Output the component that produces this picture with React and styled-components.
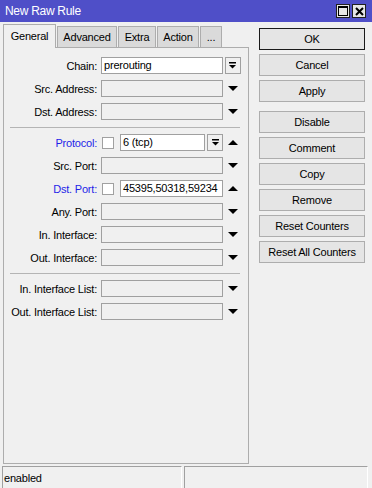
import styled, { createGlobalStyle } from "styled-components"

const GlobalStyle = createGlobalStyle`
    html, body {
        margin: 0;
        padding: 0;
        background: #f0f0f0;
    }
    body {
        font-family: "Liberation Sans", Arial, sans-serif;
        font-size: 11px;
        letter-spacing: -0.2px;
        color: #000;
    }
`

const tabs = ["General", "Advanced", "Extra", "Action", "..."]
const tabWidths = [53, 60, 38, 42, 22]

const rows = [
    { label: "Chain:", value: "prerouting", tail: "select" },
    { label: "Src. Address:", tail: "down" },
    { label: "Dst. Address:", tail: "down" },
    { sep: true },
    { label: "Protocol:", blue: true, check: true, value: "6 (tcp)", inner: true, tail: "up" },
    { label: "Src. Port:", tail: "down" },
    { label: "Dst. Port:", blue: true, check: true, value: "45395,50318,59234", tail: "up" },
    { label: "Any. Port:", tail: "down" },
    { label: "In. Interface:", tail: "down" },
    { label: "Out. Interface:", tail: "down" },
    { sep: true },
    { label: "In. Interface List:", tail: "down" },
    { label: "Out. Interface List:", tail: "down" },
]

const buttons = [
    ["OK", "Cancel", "Apply"],
    ["Disable", "Comment", "Copy", "Remove", "Reset Counters", "Reset All Counters"],
]

function Triangle({ up }) {
    return (
        <svg width="10" height="5" viewBox="0 0 10 5">
            <polygon points={up ? "0,5 10,5 5,0" : "0,0 10,0 5,5"} fill="#000" />
        </svg>
    )
}

function SelectIcon() {
    return (
        <svg width="7" height="7" viewBox="0 0 7 7">
            <rect x="0" y="0" width="7" height="1.5" fill="#000" />
            <polygon points="0,3 7,3 3.5,6.5" fill="#000" />
        </svg>
    )
}

export default function App() {
    return (
        <>
            <GlobalStyle />
            <Window>
                <TitleBar>
                    <Title>New Raw Rule</Title>
                    <Caption>
                        <CaptionButton>
                            <svg width="10" height="10" viewBox="0 0 10 10">
                                <rect x="0.5" y="0.5" width="9" height="9" fill="none" stroke="#000" />
                                <rect x="0.5" y="0.5" width="9" height="1.5" fill="#000" />
                            </svg>
                        </CaptionButton>
                        <CaptionButton>
                            <svg width="9" height="9" viewBox="0 0 9 9">
                                <path d="M1 1 L8 8 M8 1 L1 8" stroke="#000" strokeWidth="2" />
                            </svg>
                        </CaptionButton>
                    </Caption>
                </TitleBar>
                <Body>
                    <Left>
                        <TabRow>
                            {tabs.map((t, i) => (
                                <Tab key={t} $active={i === 0} $w={tabWidths[i]}>{t}</Tab>
                            ))}
                        </TabRow>
                        <Panel>
                            {rows.map((r, i) => r.sep ? <Separator key={i} /> : (
                                <Row key={i}>
                                    <Label $blue={r.blue}>{r.label}</Label>
                                    <FieldCell>
                                        {r.check && <Check />}
                                        <Input $enabled={r.value !== undefined} $indent={r.check}>{r.value}</Input>
                                        {r.inner && <DropButton $gap={2}><SelectIcon /></DropButton>}
                                    </FieldCell>
                                    <Tail>
                                        {r.tail === "select" && <DropButton><SelectIcon /></DropButton>}
                                        {r.tail === "down" && <Triangle />}
                                        {r.tail === "up" && <Triangle up />}
                                    </Tail>
                                </Row>
                            ))}
                        </Panel>
                    </Left>
                    <Right>
                        {buttons.map((group, g) => (
                            <ButtonGroup key={g}>
                                {group.map((b) => (
                                    <Button key={b} $default={b === "OK"}>{b}</Button>
                                ))}
                            </ButtonGroup>
                        ))}
                    </Right>
                </Body>
                <StatusBar>
                    <StatusCell $w={180}>enabled</StatusCell>
                    <StatusCell />
                </StatusBar>
            </Window>
        </>
    )
}

const Window = styled.div`
    width: 372px;
    height: 488px;
    display: flex;
    flex-direction: column;
    background: #f0f0f0;
    overflow: hidden;
`

const TitleBar = styled.div`
    height: 22px;
    flex-shrink: 0;
    background: #4f4fc8;
    display: flex;
    align-items: center;
    padding: 0 6px 0 5px;
    color: #fff;
    font-size: 12px;
    letter-spacing: -0.3px;
`

const Title = styled.span`
    flex: 1;
`

const Caption = styled.div`
    display: flex;
    gap: 2px;
`

const CaptionButton = styled.div`
    width: 14px;
    height: 14px;
    box-sizing: border-box;
    background: #e6e6e6;
    border: 1px solid #202020;
    display: flex;
    align-items: center;
    justify-content: center;
`

const Body = styled.div`
    flex: 1;
    display: flex;
    padding: 2px 0 0 3px;
    min-height: 0;
`

const Left = styled.div`
    width: 246px;
    display: flex;
    flex-direction: column;
`

const TabRow = styled.div`
    display: flex;
    align-items: flex-end;
    gap: 1px;
    height: 23px;
`

const Tab = styled.div`
    position: relative;
    z-index: ${p => p.$active ? 1 : 0};
    box-sizing: border-box;
    width: ${p => p.$w}px;
    height: ${p => p.$active ? 24 : 21}px;
    margin-bottom: ${p => p.$active ? -1 : 0}px;
    background: ${p => p.$active ? "#f0f0f0" : "#dadada"};
    border: 1px solid #adadad;
    border-bottom: none;
    display: flex;
    align-items: center;
    justify-content: center;
    padding-bottom: ${p => p.$active ? 2 : 0}px;
`

const Panel = styled.div`
    flex: 1;
    border: 1px solid #adadad;
    background: #f0f0f0;
    padding-top: 9px;
    display: flex;
    flex-direction: column;
    gap: 6px;
`

const Separator = styled.div`
    height: 1px;
    background: #b4b4b4;
    margin: 1px 8px 0 6px;
`

const Row = styled.div`
    display: flex;
    align-items: center;
    height: 17px;
`

const Label = styled.div`
    width: 94px;
    padding-right: 1px;
    margin-right: 3px;
    box-sizing: border-box;
    text-align: right;
    white-space: nowrap;
    color: ${p => p.$blue ? "#1f1fe8" : "#000"};
`

const FieldCell = styled.div`
    width: 122px;
    height: 17px;
    display: flex;
    align-items: center;
`

const Check = styled.div`
    width: 12px;
    height: 12px;
    margin-left: 1px;
    box-sizing: border-box;
    background: #fff;
    border: 1px solid #a0a0a0;
    flex-shrink: 0;
`

const Input = styled.div`
    flex: 1;
    height: 17px;
    box-sizing: border-box;
    margin-left: ${p => p.$indent ? 6 : 0}px;
    padding-left: 2px;
    line-height: 15px;
    white-space: nowrap;
    overflow: hidden;
    background: ${p => p.$enabled ? "#fff" : "#f0f0f0"};
    border: 1px solid #a0a0a0;
`

const DropButton = styled.div`
    width: 16px;
    height: 17px;
    margin-left: ${p => p.$gap || 0}px;
    box-sizing: border-box;
    background: #f0f0f0;
    border: 1px solid #a0a0a0;
    display: flex;
    align-items: center;
    justify-content: center;
    flex-shrink: 0;
`

const Tail = styled.div`
    width: 17px;
    height: 17px;
    margin-left: 1px;
    display: flex;
    align-items: center;
    justify-content: center;
`

const Right = styled.div`
    width: 106px;
    margin-left: 10px;
    padding-top: 4px;
    display: flex;
    flex-direction: column;
    gap: 9px;
`

const ButtonGroup = styled.div`
    display: flex;
    flex-direction: column;
    gap: 4px;
`

const Button = styled.div`
    height: 22px;
    box-sizing: border-box;
    background: #e5e5e5;
    border: 1px solid ${p => p.$default ? "#1a1a1a" : "#adadad"};
    display: flex;
    align-items: center;
    justify-content: center;
    white-space: nowrap;
`

const StatusBar = styled.div`
    height: 24px;
    flex-shrink: 0;
    display: flex;
    gap: 2px;
    padding: 2px 4px 0 2px;
    box-sizing: border-box;
`

const StatusCell = styled.div`
    ${p => p.$w ? `width: ${p.$w}px;` : "flex: 1;"}
    box-sizing: border-box;
    border-top: 1px solid #a0a0a0;
    border-left: 1px solid #a0a0a0;
    border-right: 1px solid #fff;
    padding-left: 1px;
    display: flex;
    align-items: center;
`
